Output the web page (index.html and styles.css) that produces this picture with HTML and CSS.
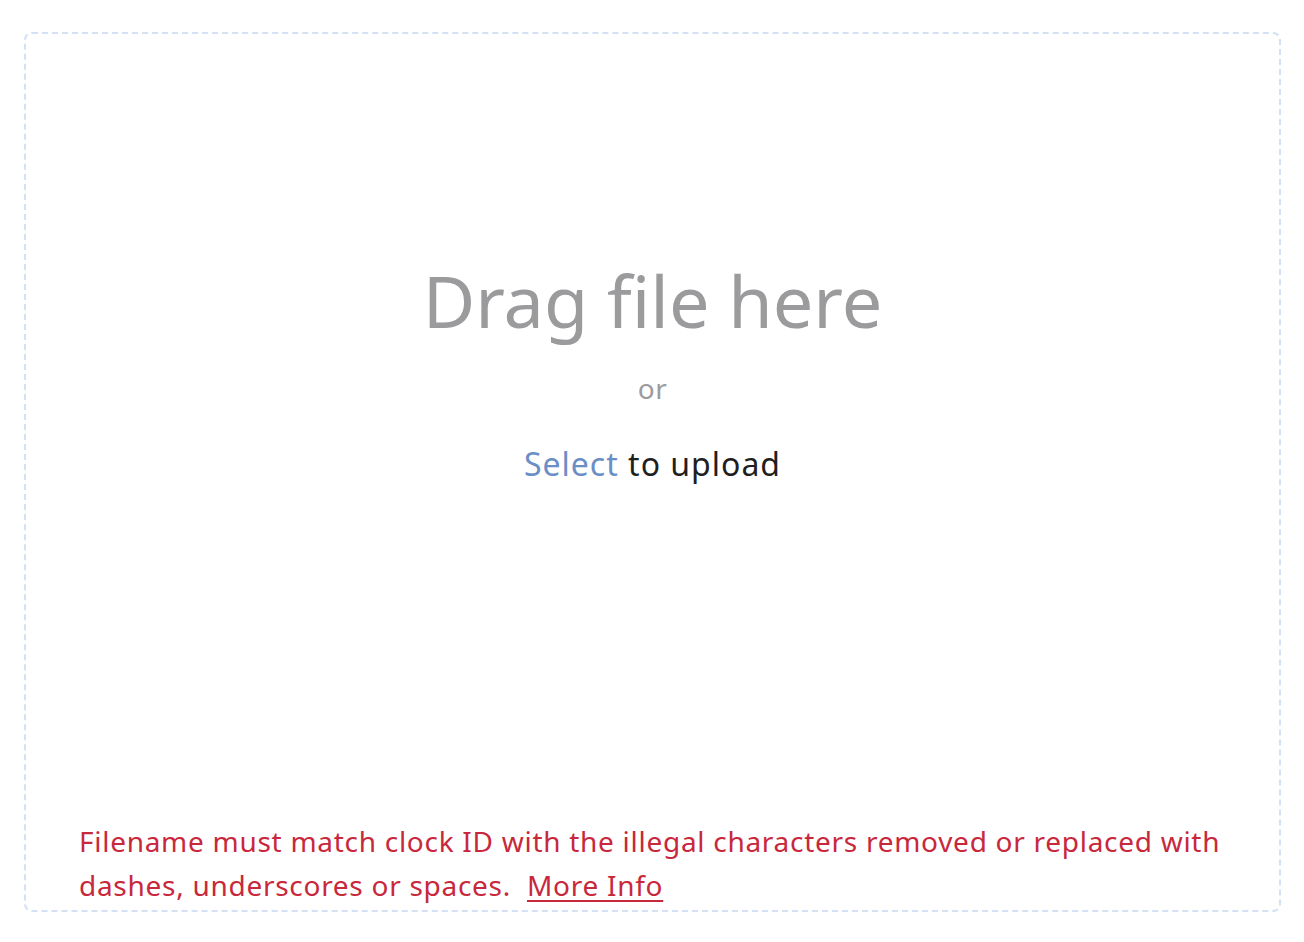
FILE: index.html
```html
<!DOCTYPE html>
<html>
<head>
<meta charset="utf-8">
<link rel="stylesheet" href="styles.css">
</head>
<body>
<div class="page">
  <div class="dropzone">
    <div class="prompt">
      <div class="title">Drag file here</div>
      <div class="or">or</div>
      <div class="select"><a class="select-link">Select</a> to upload</div>
    </div>
    <div class="error">Filename must match clock ID with the illegal characters removed or replaced with dashes, underscores or spaces.&nbsp; <a class="more">More Info</a></div>
  </div>
</div>
</body>
</html>
```
FILE: styles.css
```css
html, body {
  margin: 0;
  padding: 0;
  background: #ffffff;
}
body {
  font-family: "Noto Sans", "Open Sans", sans-serif;
}
.page {
  padding: 32px 23px 0 24px;
}
.dropzone {
  box-sizing: border-box;
  height: 880px;
  border: 2px dashed #d4e0f4;
  border-radius: 8px;
  display: flex;
  flex-direction: column;
}
.prompt {
  flex: 1;
  display: flex;
  flex-direction: column;
  align-items: center;
  padding-top: 221px;
}
.title {
  font-size: 72px;
  line-height: 90px;
  color: #9b9b9d;
}
.or {
  font-size: 28px;
  line-height: 40px;
  letter-spacing: 0.5px;
  color: #9b9b9d;
  margin-top: 23px;
}
.select {
  font-size: 32px;
  line-height: 40px;
  letter-spacing: 1px;
  color: #1f1f1f;
  margin-top: 36px;
}
.select-link {
  color: #6a8ec6;
}
.error {
  padding: 0 30px 3px 53px;
  font-size: 28px;
  line-height: 44px;
  letter-spacing: 0.72px;
  color: #c8283c;
}
.more {
  color: #c8283c;
  text-decoration: underline;
  text-underline-offset: 4px;
  text-decoration-thickness: 2px;
}
```
